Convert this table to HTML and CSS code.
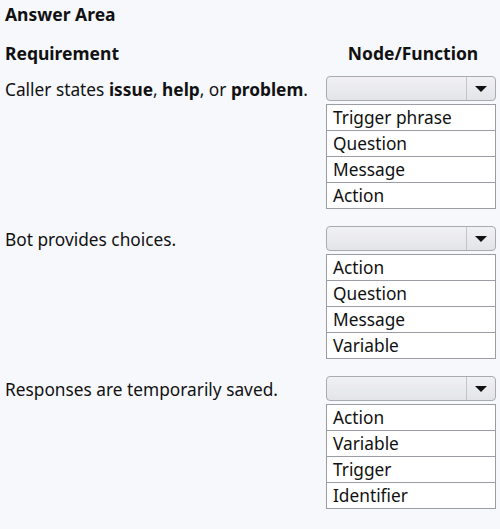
FILE: index.html
```html
<!DOCTYPE html>
<html>
<head>
    <title>Answer Area</title>
    <link rel="stylesheet" href="styles.css">
</head>
<body>
    <div class="answer-area">
        <h3 class="title">Answer Area</h3>
        <div class="head-row">
            <span class="head-req">Requirement</span>
            <span class="head-node">Node/Function</span>
        </div>

        <div class="row">
            <p class="req">Caller states <b>issue</b>, <b>help</b>, or <b>problem</b>.</p>
            <div class="pick">
                <div class="select"><span class="arrow-box"><span class="arrow"></span></span></div>
                <ul class="options">
                    <li>Trigger phrase</li>
                    <li>Question</li>
                    <li>Message</li>
                    <li>Action</li>
                </ul>
            </div>
        </div>

        <div class="row">
            <p class="req">Bot provides choices.</p>
            <div class="pick">
                <div class="select"><span class="arrow-box"><span class="arrow"></span></span></div>
                <ul class="options">
                    <li>Action</li>
                    <li>Question</li>
                    <li>Message</li>
                    <li>Variable</li>
                </ul>
            </div>
        </div>

        <div class="row">
            <p class="req">Responses are temporarily saved.</p>
            <div class="pick">
                <div class="select"><span class="arrow-box"><span class="arrow"></span></span></div>
                <ul class="options">
                    <li>Action</li>
                    <li>Variable</li>
                    <li>Trigger</li>
                    <li>Identifier</li>
                </ul>
            </div>
        </div>
    </div>
</body>
</html>
```

FILE: styles.css
```css
body {
    margin: 0;
    font-family: "Noto Sans", "Open Sans", sans-serif;
    background-color: #f7f8fc;
    color: #111;
}
.answer-area {
    padding: 2px 4px 0 5px;
}
.title {
    font-size: 17.5px;
    font-weight: bold;
    margin: 0;
    line-height: 24px;
}
.head-row {
    display: grid;
    grid-template-columns: 321px 170px;
    margin-top: 15px;
    font-size: 17.5px;
    font-weight: bold;
    line-height: 24px;
}
.head-node {
    text-align: center;
    padding-left: 4px;
}
.row {
    display: grid;
    grid-template-columns: 321px 170px;
    margin-top: 17px;
}
.head-row + .row {
    margin-top: 11px;
}
.req {
    margin: 0;
    font-size: 17.3px;
    line-height: 25px;
    padding-top: 1px;
}
.select {
    height: 23px;
    border: 1px solid #a9aab2;
    border-radius: 4px;
    background: linear-gradient(#f1f1f4, #e3e4e8);
    display: flex;
    justify-content: flex-end;
}
.arrow-box {
    width: 28px;
    border-left: 1px solid #c4c5cc;
    display: flex;
    align-items: center;
    justify-content: center;
}
.arrow {
    width: 0;
    height: 0;
    border-left: 6px solid transparent;
    border-right: 6px solid transparent;
    border-top: 6px solid #111;
}
.options {
    list-style: none;
    margin: 3px 0 0 0;
    padding: 0;
    background-color: #fff;
    border: 1px solid #9c9da4;
    border-bottom-width: 0;
}
.options li {
    height: 25px;
    line-height: 25px;
    padding-left: 6px;
    font-size: 17.3px;
    border-bottom: 1px solid #9c9da4;
}
```
